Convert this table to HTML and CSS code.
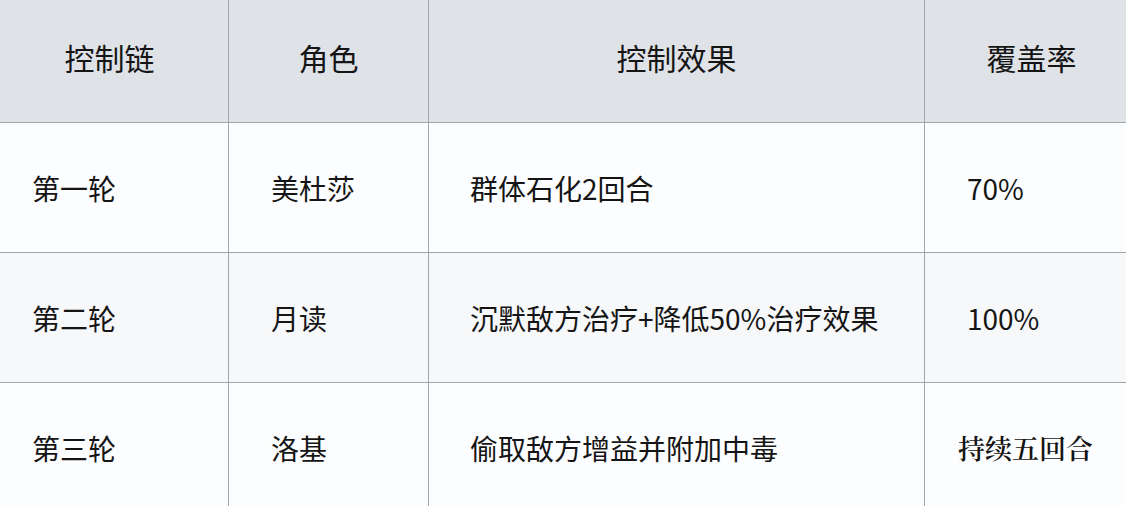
FILE: index.html
```html
<!DOCTYPE html>
<html lang="zh">
<head>
<meta charset="utf-8">
<link rel="stylesheet" href="styles.css">
</head>
<body>
<div class="table">
  <div class="cell head c1">控制链</div>
  <div class="cell head c2">角色</div>
  <div class="cell head c3">控制效果</div>
  <div class="cell head c4">覆盖率</div>

  <div class="cell c1">第一轮</div>
  <div class="cell c2">美杜莎</div>
  <div class="cell c3">群体石化2回合</div>
  <div class="cell c4">70%</div>

  <div class="cell alt c1">第二轮</div>
  <div class="cell alt c2">月读</div>
  <div class="cell alt c3">沉默敌方治疗+降低50%治疗效果</div>
  <div class="cell alt c4">100%</div>

  <div class="cell c1">第三轮</div>
  <div class="cell c2">洛基</div>
  <div class="cell c3">偷取敌方增益并附加中毒</div>
  <div class="cell c4 serif">持续五回合</div>
</div>
</body>
</html>
```
FILE: styles.css
```css
html, body {
  margin: 0;
  padding: 0;
  background: #fcfdfe;
  overflow: hidden;
}
.table {
  display: grid;
  grid-template-columns: 229px 200px 496px 201px;
  grid-template-rows: 123px 130px 130px 130px;
  font-family: "Noto Sans CJK SC", "Noto Sans", sans-serif;
  color: #151515;
}
.cell {
  box-sizing: border-box;
  display: flex;
  align-items: center;
  border-right: 1px solid #a3a5a8;
  border-bottom: 1px solid #a3a5a8;
  font-size: 28px;
  background: #fcfdfe;
}
.cell.c4 { border-right: none; }
.head {
  background: #dfe2e7;
  justify-content: center;
  font-size: 30px;
  padding-bottom: 8px;
}
.head.c1 { padding-right: 9px; }
.head.c4 { padding-left: 12px; }
.alt { background: #f7f8fa; }
.cell.c1:not(.head) { padding-left: 32px; }
.cell.c2:not(.head) { padding-left: 42px; }
.cell.c3:not(.head) { padding-left: 41px; }
.cell.c4:not(.head) { padding-left: 42px; }
.cell.serif {
  font-family: "Noto Serif CJK SC", "AR PL UMing CN", serif;
  padding-left: 33px !important;
  font-size: 27px;
  font-weight: 600;
}
```
